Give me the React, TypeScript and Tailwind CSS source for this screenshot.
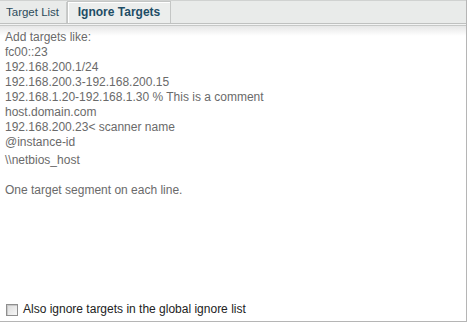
const examples = [
  'Add targets like:',
  'fc00::23',
  '192.168.200.1/24',
  '192.168.200.3-192.168.200.15',
  '192.168.1.20-192.168.1.30 % This is a comment',
  'host.domain.com',
  '192.168.200.23< scanner name',
  '@instance-id',
]

export default function App() {
  return (
    <div
      className="w-[467px] h-[322px] bg-white flex flex-col border-r border-b border-[#b5b5b5] text-[12px] leading-[15px]"
      style={{ fontFamily: '"Liberation Sans", Arial, sans-serif' }}
    >
      {/* tab strip */}
      <div className="h-[23px] bg-[#e9ebea] flex items-end border-t border-[#d0d2d1]">
        <div className="h-[21px] w-[67px] flex items-center pl-[6px] text-[11.5px] text-[#2d4b5c] border-r border-[#c9cbca]">
          Target List
        </div>
        <div className="h-[22px] w-[104px] flex items-center justify-center font-bold text-[12px] text-[#1e4d66] bg-[#eceeed] border-t border-l border-r border-[#c4c6c5] shadow-[inset_1px_1px_0_#ffffff]">
          Ignore Targets
        </div>
      </div>
      <div className="h-[1px] bg-[#bfc1c0]" />
      <div className="h-[1px] bg-[#f2f3f3]" />
      <div className="h-[1px] bg-[#c6c8c7]" />

      {/* content */}
      <div className="flex-1 flex flex-col bg-gradient-to-b from-[#e6e7e7] via-white via-[10px] to-white">
        <div className="pt-[4px] pl-[5px] text-[#6a6a6a]">
          {examples.map((line) => (
            <div key={line}>{line}</div>
          ))}
          <div className="mt-[3px]">\\netbios_host</div>
          <div className="mt-[15px]">One target segment on each line.</div>
        </div>
        <div className="flex-1" />
        <label className="flex items-center gap-[5px] pl-[6px] pb-[4px] text-[#222222]">
          <span className="w-[12px] h-[12px] border border-[#8f8f8f] bg-gradient-to-br from-[#dcdcdc] to-[#f7f7f7] shadow-[inset_1px_1px_0_#c8c8c8]" />
          <span>Also ignore targets in the global ignore list</span>
        </label>
      </div>
    </div>
  )
}
